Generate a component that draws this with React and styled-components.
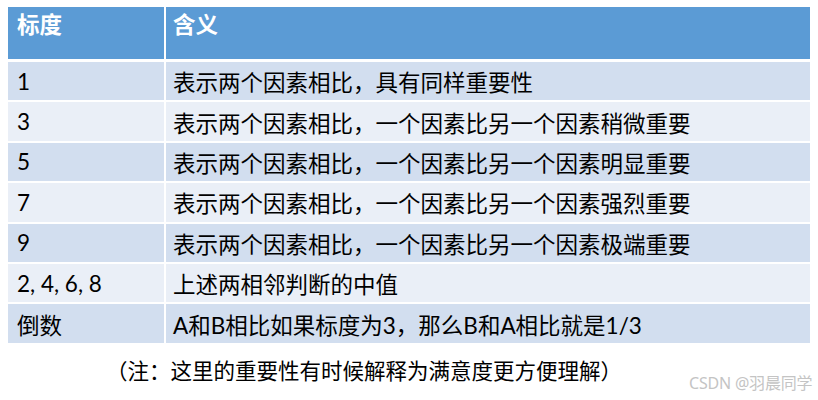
import React from "react";
import styled, { createGlobalStyle } from "styled-components";

const Global = createGlobalStyle`
  html, body { margin: 0; padding: 0; background: #ffffff; }
  body { font-family: "Lato", "Noto Sans CJK SC", sans-serif; }
`;

const Page = styled.div`
  position: relative;
  width: 818px;
  height: 400px;
  padding: 7px 8px 0 8px;
  box-sizing: border-box;
  overflow: hidden;
`;

const Table = styled.div`
  display: grid;
  grid-template-columns: 156px 1fr;
  column-gap: 2px;
  row-gap: 2px;
  width: 802px;
  background: #ffffff;
`;

const HeadCell = styled.div`
  height: 52px;
  margin-bottom: 1px;
  background: #5b9bd5;
  color: #ffffff;
  font-weight: 700;
  font-size: 22.5px;
  line-height: 30px;
  padding: 3px 0 0 ${(p) => p.$pad}px;
  box-sizing: border-box;
`;

const Cell = styled.div`
  height: 38.4px;
  display: flex;
  align-items: center;
  padding-left: ${(p) => p.$pad}px;
  background: ${(p) => (p.$odd ? "#d2deef" : "#eaeff7")};
  color: #000000;
  font-size: 22.5px;
  white-space: nowrap;
`;

const Note = styled.div`
  margin-top: 13px;
  padding-left: 98px;
  font-size: 21.5px;
  line-height: 30px;
  color: #000000;
`;

const Watermark = styled.div`
  position: absolute;
  left: 689px;
  top: 370px;
  font-family: "Noto Sans", "Noto Sans CJK SC", sans-serif;
  font-size: 16px;
  color: #c4c4c4;
  letter-spacing: -0.2px;
`;

const rows = [
  ["1", "表示两个因素相比，具有同样重要性"],
  ["3", "表示两个因素相比，一个因素比另一个因素稍微重要"],
  ["5", "表示两个因素相比，一个因素比另一个因素明显重要"],
  ["7", "表示两个因素相比，一个因素比另一个因素强烈重要"],
  ["9", "表示两个因素相比，一个因素比另一个因素极端重要"],
  ["2, 4, 6, 8", "上述两相邻判断的中值"],
  ["倒数", "A和B相比如果标度为3，那么B和A相比就是1/3"],
];

export default function App() {
  return (
    <>
      <Global />
      <Page>
        <Table>
          <HeadCell $pad={9}>标度</HeadCell>
          <HeadCell $pad={7}>含义</HeadCell>
          {rows.map(([a, b], i) => (
            <React.Fragment key={i}>
              <Cell $odd={i % 2 === 0} $pad={9}>{a}</Cell>
              <Cell $odd={i % 2 === 0} $pad={7}>{b}</Cell>
            </React.Fragment>
          ))}
        </Table>
        <Note>（注：这里的重要性有时候解释为满意度更方便理解）</Note>
        <Watermark>CSDN @羽晨同学</Watermark>
      </Page>
    </>
  );
}
